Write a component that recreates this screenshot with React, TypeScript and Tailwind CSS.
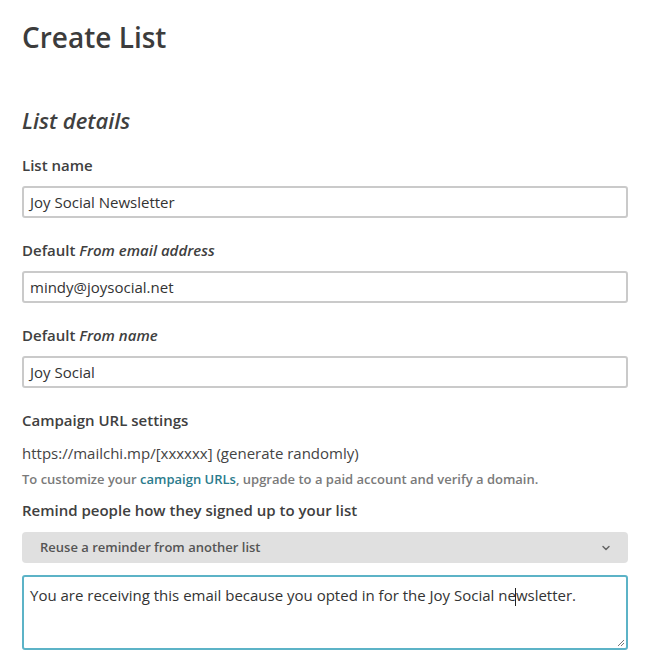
import { ChevronDown } from "lucide-react";

const font = { fontFamily: '"Open Sans", "Noto Sans", sans-serif' };

function Field(props: { label: React.ReactNode; value: string }) {
  return (
    <div className="mb-[22px]">
      <div className="text-[15px] leading-5 font-semibold text-[#404040] mb-[11px]">{props.label}</div>
      <div className="h-[32px] border-2 border-[#cacaca] rounded-[3px] bg-white flex items-center px-[6px] text-[15px] text-[#333]">
        {props.value}
      </div>
    </div>
  );
}

export default function App() {
  return (
    <div className="w-[654px] h-[654px] bg-white overflow-hidden" style={font}>
      <div className="pl-[22px] pr-[26px] pt-[17px]">
        <h1 className="text-[28px] leading-[40px] text-[#3c3c3c] font-semibold">Create List</h1>
        <h2 className="mt-[48px] text-[22px] leading-[30px] italic font-semibold text-[#404040] mb-[20px]">List details</h2>

        <Field label="List name" value="Joy Social Newsletter" />
        <Field label={<>Default <i>From email address</i></>} value="mindy@joysocial.net" />
        <Field label={<>Default <i>From name</i></>} value="Joy Social" />

        <div className="text-[15px] leading-5 font-semibold text-[#404040]">Campaign URL settings</div>
        <div className="mt-[13px] text-[15px] leading-5 text-[#444]">https://mailchi.mp/[xxxxxx] (generate randomly)</div>
        <div className="mt-[7px] text-[13px] leading-[18px] font-semibold text-[#7a7a7a]">
          To customize your <span className="text-[#2b7b8c]">campaign URLs</span>, upgrade to a paid account and verify a domain.
        </div>

        <div className="mt-[12px] text-[15px] leading-5 font-semibold text-[#404040]">Remind people how they signed up to your list</div>
        <div className="mt-[12px] h-[31px] rounded-[4px] bg-[#e0e0e0] flex items-center justify-between pl-[18px] pr-[16px]">
          <span className="text-[13px] font-semibold text-[#555]">Reuse a reminder from another list</span>
          <ChevronDown size={12} strokeWidth={3} className="text-[#666]" />
        </div>
        <div className="relative mt-[12px] h-[75px] border-2 border-[#5cb3c7] rounded-[3px] bg-white px-[6px] pt-[8px] text-[15px] leading-5 text-[#333]">
          You are receiving this email because you opted in for the Joy Social ne<span className="inline-block w-px h-[18px] bg-[#222] align-middle -mx-[0.5px]"></span>wsletter.
          <svg className="absolute right-[1px] bottom-[1px]" width="9" height="9" viewBox="0 0 9 9">
            <path d="M8 2L2 8M8 5L5 8" stroke="#777" strokeWidth="1" />
          </svg>
        </div>
      </div>
    </div>
  );
}
